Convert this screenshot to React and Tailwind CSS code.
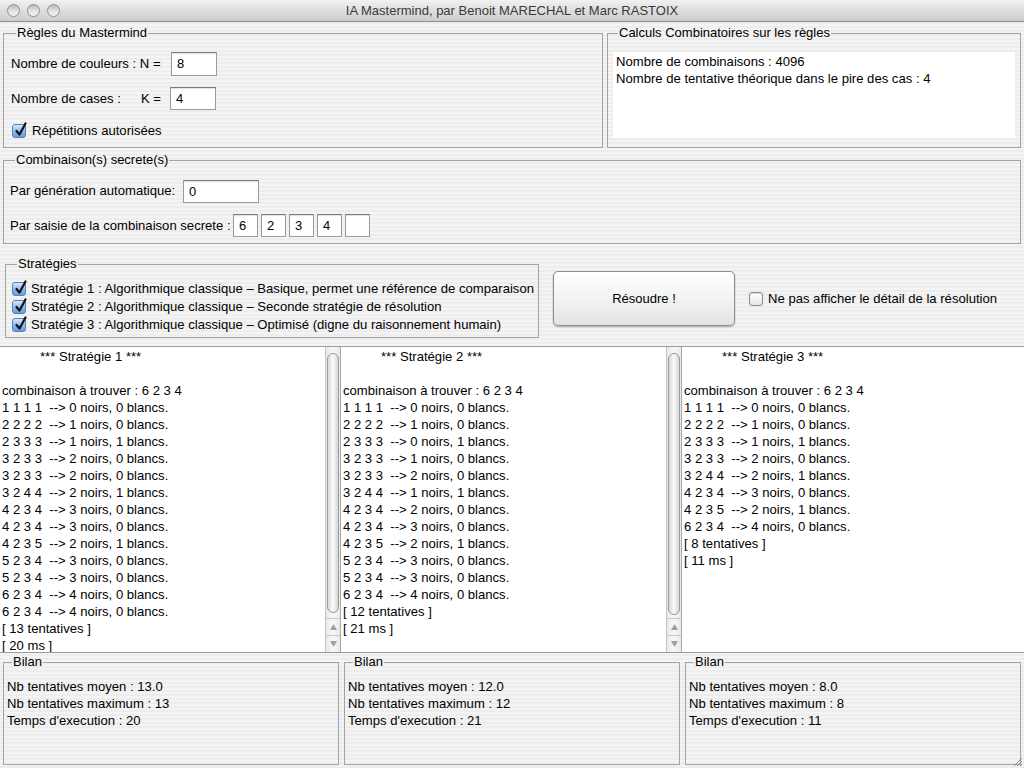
import React from "react";

const font = { fontFamily: '"Liberation Sans", Arial, sans-serif' };

function Box({ title, className = "", children }) {
  return (
    <fieldset className={"border border-[#a3a3a3] " + className}>
      <legend className="ml-[5px] px-[1px] text-[13px] leading-[16px] text-black">{title}</legend>
      {children}
    </fieldset>
  );
}

function Check({ checked }) {
  if (!checked) {
    return (
      <div className="w-[14px] h-[14px] shrink-0 rounded-[3px] border border-[#8a8a8a] bg-gradient-to-b from-[#ffffff] to-[#e6e6e6] shadow-[inset_0_1px_1px_rgba(0,0,0,0.15)]" />
    );
  }
  return (
    <div className="relative w-[14px] h-[14px] shrink-0 rounded-[3px] border border-[#5a7fb4] bg-gradient-to-b from-[#d6e8fb] via-[#8fbcef] to-[#5f9fe6]">
      <svg className="absolute left-[1px] top-[-3px] overflow-visible" width="13" height="15" viewBox="0 0 13 15">
        <path d="M2.5 9 L5.5 12.5 L11.5 1.5" fill="none" stroke="#111" strokeWidth="2.2" strokeLinecap="round" strokeLinejoin="round" />
      </svg>
    </div>
  );
}

function Field({ value, className = "" }) {
  return (
    <div className={"h-[23px] bg-white border border-[#9b9b9b] border-t-[#7a7a7a] shadow-[inset_0_1px_1px_rgba(0,0,0,0.12)] pl-[5px] text-[13px] leading-[21px] " + className}>
      {value}
    </div>
  );
}

function Scrollbar({ thumb }) {
  return (
    <div className="w-[15px] shrink-0 flex flex-col border-l border-[#c4c4c4] bg-gradient-to-r from-[#e9e9e9] via-[#f8f8f8] to-[#e9e9e9]">
      <div className="mt-[6px] mx-[1px] rounded-full border border-[#9d9d9d] bg-gradient-to-r from-[#d8d8d8] via-[#fbfbfb] to-[#d4d4d4]" style={{ height: thumb }} />
      <div className="flex-1" />
      <div className="h-[17px] border-t border-[#c8c8c8] flex items-center justify-center">
        <svg width="7" height="6" viewBox="0 0 7 6"><path d="M3.5 0 L7 6 L0 6 Z" fill="#a0a0a0" /></svg>
      </div>
      <div className="h-[17px] border-t border-[#c8c8c8] flex items-center justify-center">
        <svg width="7" height="6" viewBox="0 0 7 6"><path d="M0 0 L7 0 L3.5 6 Z" fill="#a0a0a0" /></svg>
      </div>
    </div>
  );
}

const results = [
  {
    n: 1,
    rows: [
      "1 1 1 1  --> 0 noirs, 0 blancs.",
      "2 2 2 2  --> 1 noirs, 0 blancs.",
      "2 3 3 3  --> 1 noirs, 1 blancs.",
      "3 2 3 3  --> 2 noirs, 0 blancs.",
      "3 2 3 3  --> 2 noirs, 0 blancs.",
      "3 2 4 4  --> 2 noirs, 1 blancs.",
      "4 2 3 4  --> 3 noirs, 0 blancs.",
      "4 2 3 4  --> 3 noirs, 0 blancs.",
      "4 2 3 5  --> 2 noirs, 1 blancs.",
      "5 2 3 4  --> 3 noirs, 0 blancs.",
      "5 2 3 4  --> 3 noirs, 0 blancs.",
      "6 2 3 4  --> 4 noirs, 0 blancs.",
      "6 2 3 4  --> 4 noirs, 0 blancs.",
    ],
    tries: 13,
    ms: 20,
    avg: "13.0",
    scroll: true,
  },
  {
    n: 2,
    rows: [
      "1 1 1 1  --> 0 noirs, 0 blancs.",
      "2 2 2 2  --> 1 noirs, 0 blancs.",
      "2 3 3 3  --> 0 noirs, 1 blancs.",
      "3 2 3 3  --> 1 noirs, 0 blancs.",
      "3 2 3 3  --> 2 noirs, 0 blancs.",
      "3 2 4 4  --> 1 noirs, 1 blancs.",
      "4 2 3 4  --> 2 noirs, 0 blancs.",
      "4 2 3 4  --> 3 noirs, 0 blancs.",
      "4 2 3 5  --> 2 noirs, 1 blancs.",
      "5 2 3 4  --> 3 noirs, 0 blancs.",
      "5 2 3 4  --> 3 noirs, 0 blancs.",
      "6 2 3 4  --> 4 noirs, 0 blancs.",
    ],
    tries: 12,
    ms: 21,
    avg: "12.0",
    scroll: true,
  },
  {
    n: 3,
    rows: [
      "1 1 1 1  --> 0 noirs, 0 blancs.",
      "2 2 2 2  --> 1 noirs, 0 blancs.",
      "2 3 3 3  --> 1 noirs, 1 blancs.",
      "3 2 3 3  --> 2 noirs, 0 blancs.",
      "3 2 4 4  --> 2 noirs, 1 blancs.",
      "4 2 3 4  --> 3 noirs, 0 blancs.",
      "4 2 3 5  --> 2 noirs, 1 blancs.",
      "6 2 3 4  --> 4 noirs, 0 blancs.",
    ],
    tries: 8,
    ms: 11,
    avg: "8.0",
    scroll: false,
  },
];

export default function App() {
  return (
    <div className="w-[1024px] h-[768px] flex flex-col overflow-hidden text-black text-[13.1px] leading-[16px]" style={font}>
      {/* title bar */}
      <div className="h-[22px] shrink-0 flex items-center px-[7px] border-b border-[#8d8d8d] bg-gradient-to-b from-[#f1f1f1] via-[#dedede] to-[#cdcdcd]">
        <div className="flex gap-[7px] w-[60px]">
          {[0, 1, 2].map((i) => (
            <div key={i} className="w-[13px] h-[13px] rounded-full border border-[#8f8f8f] bg-gradient-to-b from-[#b9b9b9] via-[#e2e2e2] to-[#f4f4f4]" />
          ))}
        </div>
        <div className="flex-1 text-center text-[13px] text-[#3a3a3a] pr-[60px]">
          IA Mastermind, par Benoit MARECHAL et Marc RASTOIX
        </div>
      </div>

      {/* body */}
      <div className="relative flex-1 flex flex-col px-[3px] bg-[repeating-linear-gradient(180deg,#ededed_0px,#ededed_2px,#f4f4f4_2px,#f4f4f4_4px)]">
        {/* row 1 */}
        <div className="mt-[3px] flex gap-[4px]">
          <Box title="Règles du Mastermind" className="w-[600px] h-[123px] pl-[7px]">
            <div className="mt-[11px] h-[24px] flex items-center">
              <span className="w-[160px]">Nombre de couleurs : N =</span>
              <Field value="8" className="w-[46px] h-[24px]" />
            </div>
            <div className="mt-[11px] h-[23px] flex items-center">
              <span className="w-[130px]">Nombre de cases :</span>
              <span className="w-[29px]">K =</span>
              <Field value="4" className="w-[46px]" />
            </div>
            <div className="mt-[11px] h-[20px] flex items-center gap-[6px] pl-[1px]">
              <Check checked />
              <span>Répétitions autorisées</span>
            </div>
          </Box>
          <Box title="Calculs Combinatoires sur les règles" className="flex-1 h-[123px] px-[5px]">
            <div className="mt-[11px] h-[86px] bg-white pl-[3px] pt-[1px] leading-[17px]">
              <div>Nombre de combinaisons : 4096</div>
              <div>Nombre de tentative théorique dans le pire des cas : 4</div>
            </div>
          </Box>
        </div>

        {/* row 2 */}
        <Box title="Combinaison(s) secrete(s)" className="mt-[4px] h-[92px] pl-[6px]">
          <div className="mt-[12px] h-[22px] flex items-center">
            <span className="w-[173px]">Par génération automatique:</span>
            <Field value="0" className="w-[76px] h-[22px] leading-[20px]" />
          </div>
          <div className="mt-[12px] h-[23px] flex items-center">
            <span className="w-[223px]">Par saisie de la combinaison secrete :</span>
            <div className="flex gap-[3px]">
              {["6", "2", "3", "4", ""].map((v, i) => (
                <Field key={i} value={v} className="w-[25px]" />
              ))}
            </div>
          </div>
        </Box>

        {/* row 3 */}
        <div className="mt-[12px] flex items-start">
          <Box title="Stratégies" className="ml-[2px] w-[534px] h-[82px] pl-[6px]">
            <div className="pt-[8px] flex flex-col">
              {[
                "Stratégie 1 : Algorithmique classique – Basique, permet une référence de comparaison",
                "Stratégie 2 : Algorithmique classique – Seconde stratégie de résolution",
                "Stratégie 3 : Algorithmique classique – Optimisé (digne du raisonnement humain)",
              ].map((t) => (
                <div key={t} className="h-[18px] flex items-center gap-[5px] whitespace-nowrap">
                  <Check checked />
                  <span>{t}</span>
                </div>
              ))}
            </div>
          </Box>
          <button className="ml-[14px] mt-[15px] w-[182px] h-[55px] rounded-[5px] border border-[#8e8e8e] bg-gradient-to-b from-[#ffffff] via-[#f3f3f3] to-[#e4e4e4] shadow-[0_1px_2px_rgba(0,0,0,0.3)] text-[13px]">
            Résoudre !
          </button>
          <div className="ml-[14px] mt-[35px] h-[16px] flex items-center gap-[5px]">
            <Check checked={false} />
            <span>Ne pas afficher le détail de la résolution</span>
          </div>
        </div>

        {/* results */}
        <div className="mt-[8px] -mx-[3px] h-[307px] flex border-t border-b border-[#9a9a9a] bg-white">
          {results.map((r) => (
            <div key={r.n} className={"flex overflow-hidden " + (r.scroll ? "w-[341px] border-r border-[#a8a8a8]" : "flex-1")}>
              <div className="flex-1 overflow-hidden pt-[1px] pl-[2px] leading-[17px] whitespace-pre">
                <div className="pl-[38px]">*** Stratégie {r.n} ***</div>
                <div>&nbsp;</div>
                <div>combinaison à trouver : 6 2 3 4</div>
                {r.rows.map((row, i) => (
                  <div key={i}>{row}</div>
                ))}
                <div>[ {r.tries} tentatives ]</div>
                <div>[ {r.ms} ms ]</div>
              </div>
              {r.scroll && <Scrollbar thumb={r.n === 1 ? 260 : 262} />}
            </div>
          ))}
        </div>

        {/* bilan */}
        <div className="mt-[1px] grid grid-cols-3 gap-[5px]">
          {results.map((r) => (
            <Box key={r.n} title="Bilan" className="h-[111px] pl-[3px]">
              <div className="mt-[8px] leading-[17px]">
                <div>Nb tentatives moyen : {r.avg}</div>
                <div>Nb tentatives maximum : {r.tries}</div>
                <div>Temps d'execution : {r.ms}</div>
              </div>
            </Box>
          ))}
        </div>

        {/* resize grip */}
        <svg className="absolute right-[1px] bottom-[1px]" width="12" height="12" viewBox="0 0 12 12">
          <path d="M11 3 L3 11 M11 6 L6 11 M11 9 L9 11" stroke="#8a8a8a" strokeWidth="1" />
        </svg>
      </div>
    </div>
  );
}
